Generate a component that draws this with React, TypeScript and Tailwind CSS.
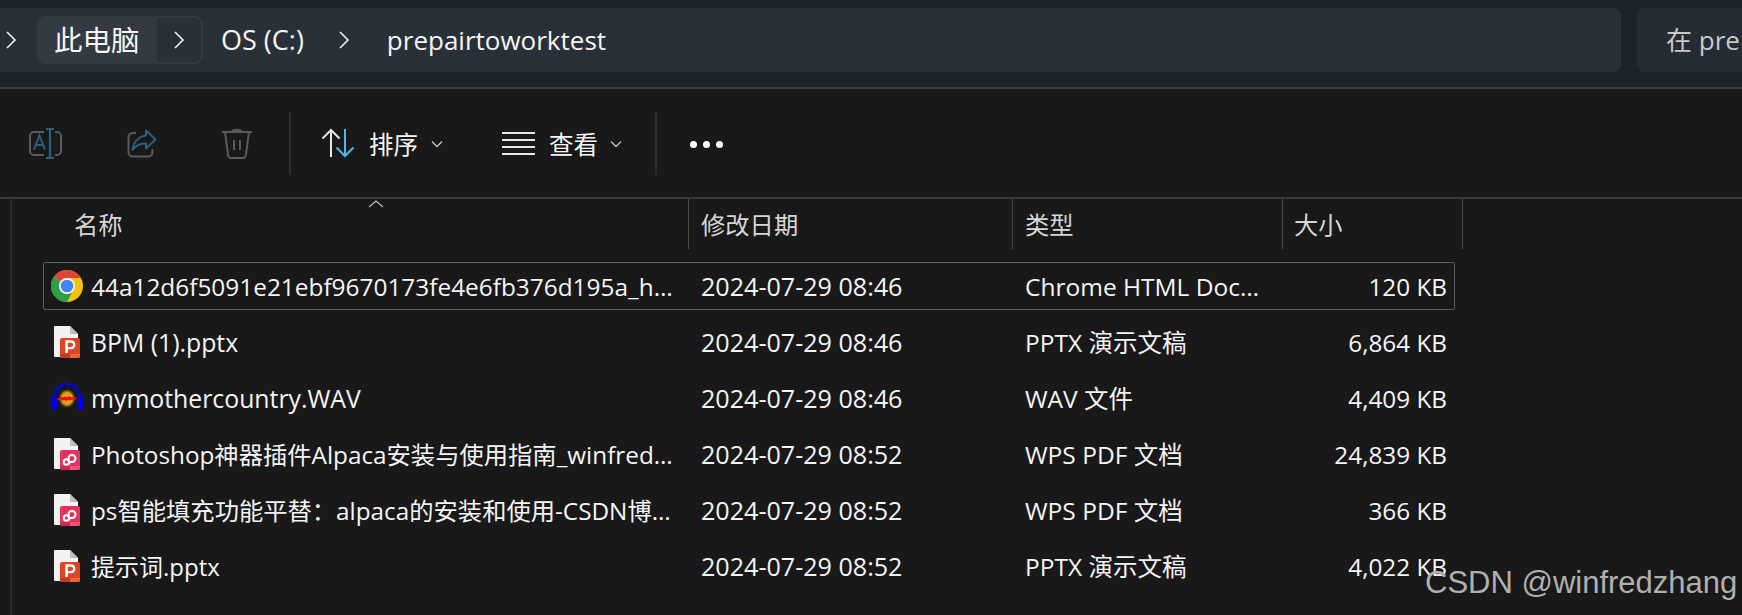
import React from "react";

const F = "font-['Open_Sans','Noto_Sans_CJK_SC',sans-serif]";

function Chevron({ className = "" }: { className?: string }) {
  return (
    <svg width="12" height="20" viewBox="0 0 12 20" className={className} fill="none" stroke="#f0f0f0" strokeWidth="1.6">
      <path d="M2 2l8 8-8 8" />
    </svg>
  );
}

function Down({ className = "" }: { className?: string }) {
  return (
    <svg width="12" height="8" viewBox="0 0 12 8" className={className} fill="none" stroke="#c8c8c8" strokeWidth="1.3">
      <path d="M1 1.500l5 5 5-5" />
    </svg>
  );
}

function RenameIcon() {
  return (
    <svg width="33" height="31" viewBox="0 0 33 31" fill="none" className="ml-[29px]">
      <path d="M15 4H5a4 4 0 0 0-4 4v15a4 4 0 0 0 4 4h10M26 4h2a4 4 0 0 1 4 4v15a4 4 0 0 1-4 4h-2" stroke="#5a5a5a" strokeWidth="2" />
      <path d="M21 1v29M17 1h8M17 30h8" stroke="#2b6080" strokeWidth="2.200" />
      <path d="M5 21.500l5.500-14 5.500 14M7 17h7" stroke="#2b6080" strokeWidth="2" />
    </svg>
  );
}

function ShareIcon() {
  return (
    <svg width="30" height="29" viewBox="0 0 30 29" fill="none" className="ml-[65px]">
      <path d="M9 4H6a4.500 4.500 0 0 0-4.500 4.500V23A4.500 4.500 0 0 0 6 27.500h15a4.500 4.500 0 0 0 4.500-4.500v-3" stroke="#5a5a5a" strokeWidth="2" />
      <path d="M19 1.500l9.500 9-9.500 9v-5C13 14 9 16.500 5.500 21 6.500 13.500 11 7.500 19 6.500z" stroke="#2b6080" strokeWidth="2" strokeLinejoin="round" />
    </svg>
  );
}

function TrashIcon() {
  return (
    <svg width="30" height="31" viewBox="0 0 30 31" fill="none" stroke="#5a5a5a" strokeWidth="2" className="ml-[65px]">
      <path d="M0 4h30M10 4c1-3 9-3 10 0" />
      <path d="M3 4l3 22a3.500 3.500 0 0 0 3.500 4h11a3.500 3.500 0 0 0 3.500-4l3-22" />
      <path d="M12 12v10M18 12v10" />
    </svg>
  );
}

function SortIcon() {
  return (
    <svg width="36" height="32" viewBox="0 0 36 32" fill="none" strokeWidth="2" className="ml-[30px]">
      <path d="M10 30V3M1.500 11.500L10 3l8.500 8.500" stroke="#e8e8e8" />
      <path d="M24 2v27M15.500 20.500L24 29l8.500-8.500" stroke="#4fb6ee" />
    </svg>
  );
}

function ViewIcon() {
  return (
    <svg width="33" height="26" viewBox="0 0 33 26" stroke="#e8e8e8" strokeWidth="2" className="ml-[59px]">
      <path d="M0 3h33M0 10h33M0 17h33M0 24h33" />
    </svg>
  );
}

function ChromeIcon() {
  return (
    <svg width="32" height="32" viewBox="0 0 48 48">
      <circle cx="24" cy="24" r="24" fill="#f4c20d" />
      <path d="M24 0a24 24 0 0 1 20.800 12H24a12 12 0 0 0-10.400 6L5.100 9.200A24 24 0 0 1 24 0z" fill="#db4437" />
      <path d="M5.100 9.200A24 24 0 0 0 24 48l8-15a12 12 0 0 1-18.400-15z" fill="#2f9e4a" />
      <circle cx="24" cy="24" r="12" fill="#f5f5f5" />
      <circle cx="24" cy="24" r="9.500" fill="#4285f4" />
    </svg>
  );
}

function DocIcon({ kind }: { kind: "p" | "pdf" }) {
  const main = kind === "p" ? "#dd4325" : "#e13460";
  const dark = kind === "p" ? "#bf3a1f" : "#c42a52";
  const light = kind === "p" ? "#f0643c" : "#f4537c";
  return (
    <svg width="26" height="32" viewBox="0 0 26 32" className="ml-[3px]">
      <path d="M1 0h15l8 8v22a1 1 0 0 1-1 1H1a1 1 0 0 1-1-1V1a1 1 0 0 1 1-1z" fill="#f2f2f2" />
      <path d="M16 0l8 8h-8z" fill="#bdbdbd" />
      <rect x="6" y="12" width="20" height="20" rx="2" fill={main} />
      <path d="M6 28h20v2a2 2 0 0 1-2 2H8a2 2 0 0 1-2-2z" fill={dark} />
      <path d="M16 28h10v2a2 2 0 0 1-2 2h-8z" fill={light} />
      {kind === "p" ? (
        <path d="M12.500 27V15.500h4.500a3.300 3.300 0 0 1 0 6.600h-4.500" fill="none" stroke="#fff" strokeWidth="2.400" />
      ) : (
        <g fill="none" stroke="#fff" strokeWidth="2">
          <circle cx="12.500" cy="24" r="2.800" />
          <path d="M15.300 24H18a3.500 3.500 0 1 0-3.500-3.500V24" />
        </g>
      )}
    </svg>
  );
}

function WavIcon() {
  return (
    <svg width="32" height="28" viewBox="0 0 32 28" className="mb-[2px]">
      <defs>
        <radialGradient id="wavGlow" cx="50%" cy="50%" r="50%">
          <stop offset="0%" stopColor="#f2b020" />
          <stop offset="65%" stopColor="#d49a1c" />
          <stop offset="100%" stopColor="#6b5a18" stopOpacity="0.100" />
        </radialGradient>
      </defs>
      <path d="M3.500 18v-5a12.500 12 0 0 1 25 0v5" fill="none" stroke="#0000f0" strokeWidth="2.400" />
      <rect x="0" y="13" width="6" height="14" rx="3" fill="#0000e8" />
      <rect x="26" y="13" width="6" height="14" rx="3" fill="#0000e8" />
      <ellipse cx="16" cy="15.500" rx="8.500" ry="9.500" fill="url(#wavGlow)" />
      <path d="M6.500 15h3l1.500-1 2 .5 1-1.500 2 1.500 2-1.500 2 1 1.500.5h4v2h-4l-2 1-2-.5-2 1-2-1-2 .5-2-.5h-2.500z" fill="#f01010" />
    </svg>
  );
}

const rows = [
  { icon: <ChromeIcon />, name: "44a12d6f5091e21ebf9670173fe4e6fb376d195a_h…", nameSize: "text-[24.4px]", date: "2024-07-29 08:46", type: "Chrome HTML Doc…", size: "120 KB" },
  { icon: <DocIcon kind="p" />, name: "BPM (1).pptx", nameSize: "text-[24.8px]", date: "2024-07-29 08:46", type: "PPTX 演示文稿", size: "6,864 KB" },
  { icon: <WavIcon />, name: "mymothercountry.WAV", nameSize: "text-[24.8px]", date: "2024-07-29 08:46", type: "WAV 文件", size: "4,409 KB" },
  { icon: <DocIcon kind="pdf" />, name: "Photoshop神器插件Alpaca安装与使用指南_winfred…", nameSize: "text-[24.3px]", date: "2024-07-29 08:52", type: "WPS PDF 文档", size: "24,839 KB" },
  { icon: <DocIcon kind="pdf" />, name: "ps智能填充功能平替：alpaca的安装和使用-CSDN博…", nameSize: "text-[24.3px]", date: "2024-07-29 08:52", type: "WPS PDF 文档", size: "366 KB" },
  { icon: <DocIcon kind="p" />, name: "提示词.pptx", nameSize: "text-[24px]", date: "2024-07-29 08:52", type: "PPTX 演示文稿", size: "4,022 KB" },
];

export default function App() {
  return (
    <div className={`relative w-[1742px] h-[615px] overflow-hidden bg-[#191919] text-[#f5f5f5] ${F}`}>
      {/* address bar */}
      <div className="h-[89px] bg-[#1b232b] border-b-2 border-[#3a3a3a] pt-[8px] flex">
        <div className="w-[1621px] h-[64px] bg-[#2a3037] rounded-r-[8px] flex items-center text-[26px]">
          <Chevron className="ml-[5px]" />
          <div className="ml-[20px] w-[166px] h-[48px] rounded-[8px] border-2 border-[#343a41] flex overflow-hidden">
            <div className="w-[118px] bg-[#343a42] flex items-center pl-[15px] text-[28.5px]">此电脑</div>
            <div className="flex-1 flex items-center justify-center">
              <Chevron />
            </div>
          </div>
          <span className="ml-[18px] text-[27px]">OS (C:)</span>
          <Chevron className="ml-[34px]" />
          <span className="ml-[37px]">prepairtoworktest</span>
        </div>
        <div className="ml-[16px] flex-1 h-[64px] bg-[#262c33] rounded-l-[8px] flex items-center pl-[29px] text-[26px] text-[#c8c8c8] whitespace-nowrap">
          在 pre
        </div>
      </div>

      {/* toolbar */}
      <div className="h-[110px] border-b-2 border-[#3a3a3a] flex items-center">
        <RenameIcon />
        <ShareIcon />
        <TrashIcon />
        <div className="ml-[37px] w-[2px] h-[63px] bg-[#2e2e2e]" />
        <SortIcon />
        <span className="ml-[12px] pt-[4px] text-[24.5px]">排序</span>
        <Down className="ml-[13px] mt-[2px]" />
        <ViewIcon />
        <span className="ml-[14px] pt-[4px] text-[24.5px]">查看</span>
        <Down className="ml-[12px] mt-[2px]" />
        <div className="ml-[33px] w-[2px] h-[63px] bg-[#2e2e2e]" />
        <div className="ml-[33px] pt-[2px] flex gap-[6px]">
          <span className="w-[7px] h-[7px] rounded-full bg-white" />
          <span className="w-[7px] h-[7px] rounded-full bg-white" />
          <span className="w-[7px] h-[7px] rounded-full bg-white" />
        </div>
      </div>

      {/* file list */}
      <div className="pl-[10px] h-[416px]">
        <div className="relative h-full border-l-2 border-[#2a2a2a]">
          <svg width="16" height="8" viewBox="0 0 16 8" fill="none" stroke="#bdbdbd" strokeWidth="1.200" className="absolute left-[356px] top-[1px]">
            <path d="M1 7l7-6 7 6" />
          </svg>
          <div className="grid grid-cols-[677px_324px_270px_180px] h-[50px] text-[24.3px] text-[#d6d6d6]">
            <div className="pl-[62px] pt-[2px] flex items-center border-r border-[#4a4a4a]">名称</div>
            <div className="pl-[12px] pt-[2px] flex items-center border-r border-[#4a4a4a]">修改日期</div>
            <div className="pl-[12px] pt-[2px] flex items-center border-r border-[#4a4a4a]">类型</div>
            <div className="pl-[11px] pt-[2px] flex items-center border-r border-[#4a4a4a]">大小</div>
          </div>
          <div className="pt-[9px]">
            {rows.map((r, i) => (
              <div key={r.name} className="h-[56px] flex items-center">
                <div
                  className={`ml-[31px] w-[1412px] h-[48px] rounded-[2px] border grid grid-cols-[645px_324px_270px_171px] items-center text-[24.500px] whitespace-nowrap ${
                    i === 0 ? "border-[#5e5e5e]" : "border-transparent"
                  }`}
                >
                  <div className="flex items-center overflow-hidden">
                    <div className="w-[47px] pl-[7px] shrink-0 flex items-center">{r.icon}</div>
                    <span className={`${r.nameSize} pt-[2px]`}>{r.name}</span>
                  </div>
                  <div className="pl-[12px] pt-[2px] text-[25.100px]">{r.date}</div>
                  <div className="pl-[12px] pt-[2px]">{r.type}</div>
                  <div className="text-right pr-[7px] pt-[2px] text-[24.300px]">{r.size}</div>
                </div>
              </div>
            ))}
          </div>
        </div>
      </div>

      <div className="absolute left-[1425px] top-[560px] font-['Liberation_Sans',sans-serif] text-[31px] text-[#b0b0b0] whitespace-nowrap">
        CSDN @winfredzhang
      </div>
    </div>
  );
}
